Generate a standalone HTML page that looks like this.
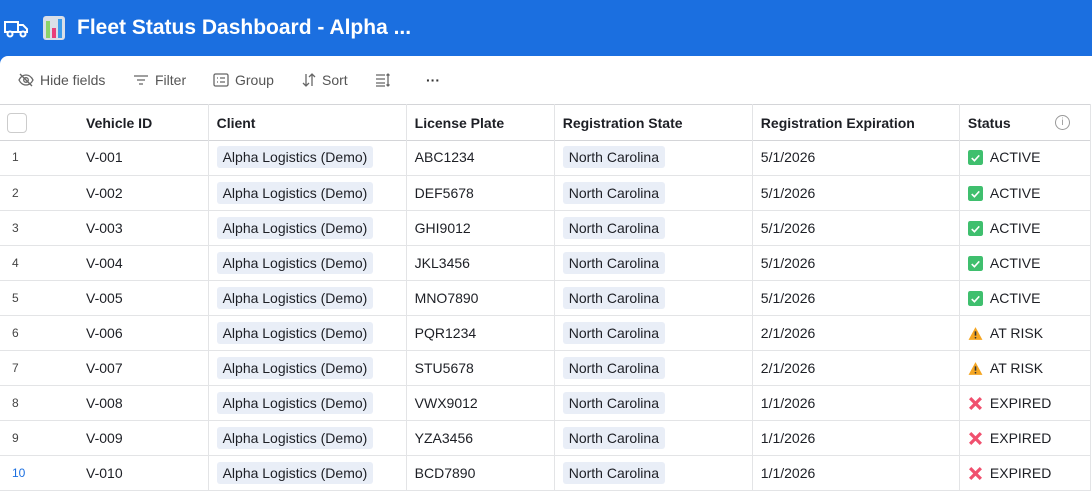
<!DOCTYPE html>
<html><head><style>
*{box-sizing:border-box;margin:0;padding:0}
body{width:1092px;height:494px;overflow:hidden;background:#1b6fe0;font-family:"Liberation Sans","DejaVu Sans",sans-serif;color:#1d1f25}
.hdr{height:56px;display:flex;align-items:center;padding-left:4px;color:#fff;font-weight:bold;font-size:21px}
.panel{position:absolute;top:56px;left:0;width:1092px;height:438px;background:#fff;border-top-left-radius:8px}
.tb{height:48px;display:flex;align-items:center;font-size:14px;color:#555}
.tb span{position:absolute;display:flex;align-items:center;gap:6px}
table{position:absolute;top:48px;left:0;border-collapse:collapse;font-size:14px;table-layout:fixed;width:1091px}
td,th{height:35.1px;border-bottom:1px solid #e3e4e6;white-space:nowrap;overflow:hidden;text-align:left;padding-left:8px}
th{height:36px;font-weight:bold;border-top:1px solid #d4d5d8;border-bottom:1px solid #d4d5d8}
.v{border-right:1px solid #e3e4e6}
.n{font-size:12px;color:#444;padding-left:12px}
.pill{background:#e9eef7;border-radius:3px;padding:3px 6px;display:inline-block}
.ic{display:inline-block;width:15px;height:15px;vertical-align:-3px;margin-right:7px}
</style></head><body>
<div class="hdr">
<svg width="26" height="22" viewBox="0 0 26 22" fill="none" stroke="#fff" stroke-width="2"><rect x="1" y="5" width="13" height="10"/><path d="M14 8h5l4 4v3h-9z"/><circle cx="6" cy="17" r="2.5" fill="#1b6fe0"/><circle cx="19" cy="17" r="2.5" fill="#1b6fe0"/></svg>
<svg width="24" height="26" viewBox="0 0 24 26" style="margin-left:12px"><rect x="1" y="1" width="22" height="24" rx="3" fill="#d9dfe8"/><rect x="4" y="6" width="4" height="17" fill="#8bd46a"/><rect x="10" y="13" width="4" height="10" fill="#e83f7a"/><rect x="16" y="4" width="4" height="19" fill="#3d9be9"/></svg>
<span style="margin-left:11px">Fleet Status Dashboard - Alpha ...</span></div>
<div class="panel">
<div class="tb">
<span style="left:18px"><svg width="16" height="14" viewBox="0 0 16 14" fill="none" stroke="#666" stroke-width="1.3"><path d="M1 7c2-4 5-5 7-5s5 1 7 5c-2 4-5 5-7 5S3 11 1 7z"/><circle cx="8" cy="7" r="2.3"/><path d="M2 1l12 12"/></svg>Hide fields</span>
<span style="left:133px"><svg width="16" height="12" viewBox="0 0 16 12" stroke="#666" stroke-width="1.3"><path d="M1 2h14M4 6h8M6 10h4"/></svg>Filter</span>
<span style="left:213px"><svg width="16" height="14" viewBox="0 0 16 14" fill="none" stroke="#666" stroke-width="1.3"><rect x="1" y="1" width="14" height="12" rx="1.5"/><path d="M4 5h1M7 5h5M4 9h1M7 9h5"/></svg>Group</span>
<span style="left:302px"><svg width="14" height="14" viewBox="0 0 14 14" fill="none" stroke="#666" stroke-width="1.3"><path d="M4 1v12M1 10l3 3 3-3M10 13V1M7 4l3-3 3 3"/></svg>Sort</span>
<span style="left:375px"><svg width="16" height="14" viewBox="0 0 16 14" fill="none" stroke="#666" stroke-width="1.3"><path d="M1 2h9M1 6h9M1 10h9M1 13h9M13 1v12M11.5 2.5L13 1l1.5 1.5M11.5 11.5L13 13l1.5-1.5"/></svg></span>
<span style="left:426px;font-weight:bold;color:#333">···</span>
</div>
<table>
<colgroup><col style="width:78px"><col style="width:130px"><col style="width:198px"><col style="width:148px"><col style="width:198px"><col style="width:207px"><col style="width:131px"></colgroup>
<tr><th><div style="width:20px;height:20px;border:1px solid #ccc;border-radius:4px;margin-left:-1px"></div></th><th class="v">Vehicle ID</th><th class="v">Client</th><th class="v">License Plate</th><th class="v">Registration State</th><th class="v">Registration Expiration</th><th class="v">Status <span style="float:right;margin-right:20px;width:15px;height:15px;border:1px solid #999;border-radius:50%;font-size:10px;color:#999;text-align:center;line-height:13px;font-weight:normal">i</span></th></tr>
</table>
<table style="top:84px">
<colgroup><col style="width:78px"><col style="width:130px"><col style="width:198px"><col style="width:148px"><col style="width:198px"><col style="width:207px"><col style="width:131px"></colgroup>
<tbody id="b"></tbody>
</table>
</div>
<script>
var d=[["V-001","ABC1234","5/1/2026",0],["V-002","DEF5678","5/1/2026",0],["V-003","GHI9012","5/1/2026",0],["V-004","JKL3456","5/1/2026",0],["V-005","MNO7890","5/1/2026",0],["V-006","PQR1234","2/1/2026",1],["V-007","STU5678","2/1/2026",1],["V-008","VWX9012","1/1/2026",2],["V-009","YZA3456","1/1/2026",2],["V-010","BCD7890","1/1/2026",2]];
var ic=['<svg class="ic" viewBox="0 0 14 14"><rect width="14" height="14" rx="2" fill="#3fbf6e"/><path d="M3.5 7.5l2.5 2.5 4.5-5" stroke="#fff" stroke-width="1.5" fill="none"/></svg>ACTIVE',
'<svg class="ic" viewBox="0 0 14 14"><path d="M7 1L13.5 13H.5z" fill="#f5a623"/><path d="M7 5v4" stroke="#333" stroke-width="1.5"/><circle cx="7" cy="11" r=".8" fill="#333"/></svg>AT RISK',
'<svg class="ic" viewBox="0 0 14 14"><path d="M2 2l10 10M12 2L2 12" stroke="#f0506e" stroke-width="3"/></svg>EXPIRED'];
var h='';d.forEach(function(r,i){h+='<tr><td class="n"'+(i==9?' style="color:#1b6fe0"':'')+'>'+(i+1)+'</td><td class="v">'+r[0]+'</td><td class="v"><span class="pill">Alpha Logistics (Demo)</span></td><td class="v">'+r[1]+'</td><td class="v"><span class="pill">North Carolina</span></td><td class="v">'+r[2]+'</td><td class="v">'+ic[r[3]]+'</td></tr>'});
document.getElementById('b').innerHTML=h;
</script>
</body></html>
